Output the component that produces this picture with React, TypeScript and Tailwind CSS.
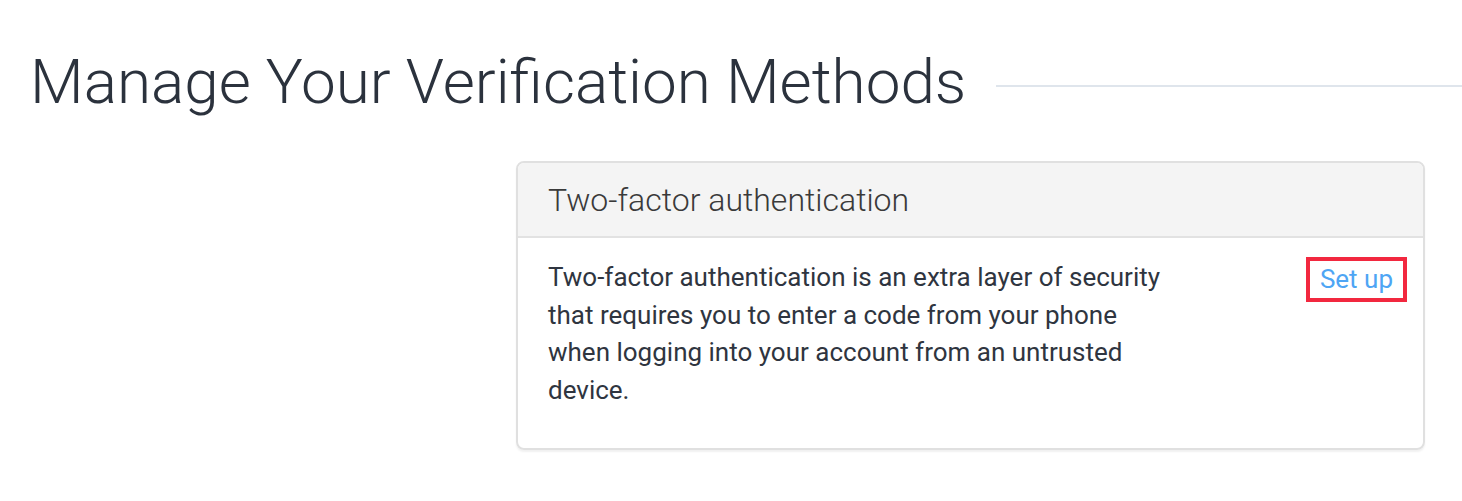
export default function App() {
  return (
    <div className="min-h-[501px] bg-white font-['Roboto',sans-serif]">
      <div className="flex items-center pt-[44px]">
        <h1 className="shrink-0 pl-[30px] text-[62px] leading-[76px] font-light text-[#2b323d]">
          Manage Your Verification Methods
        </h1>
        <div className="ml-[30px] mt-[8px] h-[2px] flex-1 bg-[#dfe5ec]" />
      </div>

      <div className="mt-[41px] ml-[516px] mr-[37px] rounded-[8px] border-2 border-[#e0e0e0] shadow-[0_2px_2px_rgba(0,0,0,0.06)] overflow-hidden">
        <div className="h-[75px] flex items-center bg-[#f4f4f4] border-b-2 border-[#e2e2e2] px-[30px]">
          <h2 className="text-[32px] font-light text-[#3a3a3a]">Two-factor authentication</h2>
        </div>
        <div className="flex justify-between pl-[30px] pr-[16px] pt-[21px] pb-[39px]">
          <p className="w-[618px] text-[26px] leading-[37.5px] text-[#2f3540]">
            Two-factor authentication is an extra layer of security that requires you to enter a code from your phone
            when logging into your account from an untrusted device.
          </p>
          <div className="self-start -mt-[2px]">
            <a href="#" className="block border-4 border-[#f2283f] px-[10px] text-[26px] leading-[37px] text-[#4ea5f4]">
              Set up
            </a>
          </div>
        </div>
      </div>
    </div>
  )
}
